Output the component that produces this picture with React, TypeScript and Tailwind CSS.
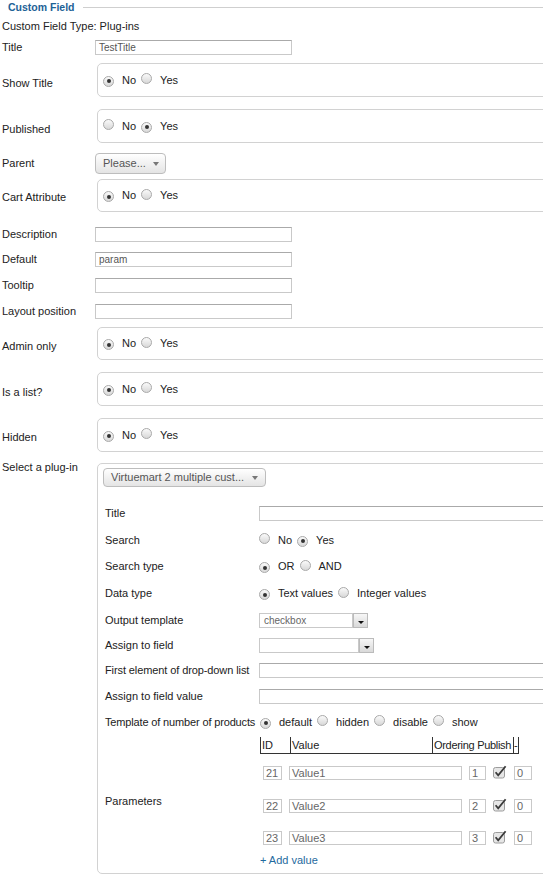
import React from 'react';

type RadioProps = { checked?: boolean };

const Radio: React.FC<RadioProps> = ({ checked }) => (
  <span className="inline-flex w-[11px] h-[11px] shrink-0 items-center justify-center rounded-full border border-[#a9a9a9] bg-linear-to-b from-[#fafafa] to-[#d8d8d8]">
    {checked && <span className="w-[4px] h-[4px] rounded-full bg-[#333]" />}
  </span>
);

const RadioOptions: React.FC<{ options: string[]; selected: number }> = ({ options, selected }) => (
  <div className="flex items-center">
    {options.map((opt, i) => (
      <React.Fragment key={opt}>
        <span className={i === 0 ? '' : 'ml-[5px]'}>
          <Radio checked={i === selected} />
        </span>
        <span className="ml-[8px]">{opt}</span>
      </React.Fragment>
    ))}
  </div>
);

const Caret: React.FC = () => (
  <span className="w-0 h-0 border-l-[3px] border-r-[3px] border-t-[4px] border-l-transparent border-r-transparent border-t-[#777]" />
);

const TextInput: React.FC<{ value?: string; width?: string }> = ({ value, width = 'w-[197px]' }) => (
  <div className={`${width} h-[15px] shrink-0 flex items-center border border-[#c9c9c9] border-t-[#aaa] bg-white px-[3px] text-[10px] leading-none text-[#555]`}>
    {value}
  </div>
);

const RadioBox: React.FC<{ selected: number }> = ({ selected }) => (
  <div className="ml-[2px] -mr-[40px] flex-1 h-full flex items-center pl-[5px] border border-[#d2d2d2] rounded-[5px]">
    <RadioOptions options={['No', 'Yes']} selected={selected} />
  </div>
);

const Row: React.FC<{ label: string; cls: string; labelCls?: string; children: React.ReactNode }> = ({
  label,
  cls,
  labelCls = '',
  children
}) => (
  <div className={`${cls} flex items-center`}>
    <div className={`w-[95px] shrink-0 pl-[2px] ${labelCls}`}>{label}</div>
    {children}
  </div>
);

const SmallSelect: React.FC<{ value?: string; width: string }> = ({ value, width }) => (
  <div className="flex h-[15px]">
    <div className={`${width} flex items-center border border-[#c9c9c9] bg-white pl-[4px] text-[10px] text-[#666]`}>{value}</div>
    <div className="w-[15px] flex items-end justify-center pb-[3px] border border-[#bbb] bg-linear-to-b from-[#f7f7f7] to-[#d9d9d9]">
      <span className="w-0 h-0 border-l-[3px] border-r-[3px] border-t-[3px] border-l-transparent border-r-transparent border-t-[#111]" />
    </div>
  </div>
);

const InnerRow: React.FC<{ label: string; cls: string; labelCls?: string; children?: React.ReactNode }> = ({
  label,
  cls,
  labelCls = '',
  children
}) => (
  <div className={`${cls} flex items-center`}>
    <div className={`w-[156px] shrink-0 pl-[2px] whitespace-nowrap ${labelCls}`}>{label}</div>
    {children}
  </div>
);

const Check: React.FC = () => (
  <svg width="15" height="14" viewBox="0 0 15 14" className="shrink-0">
    <rect x="0.5" y="2.5" width="11" height="10.5" rx="2" fill="#e6e6e6" stroke="#9c9c9c" />
    <path d="M2.6 7.2 L5.2 10.4 L12.6 1.2" stroke="#3a3a3a" strokeWidth="1.8" fill="none" />
  </svg>
);

const paramRows = [
  { id: '21', value: 'Value1', order: '1', cls: 'mt-[12px]' },
  { id: '22', value: 'Value2', order: '2', cls: 'mt-[19px]' },
  { id: '23', value: 'Value3', order: '3', cls: 'mt-[18px]' }
];

const App: React.FC = () => {
  return (
    <div className="w-[543px] h-[875px] overflow-hidden bg-white font-['Liberation_Sans',Arial,sans-serif] text-[11px] leading-[13px] text-[#222]">
      {/* Legend */}
      <div className="h-[14px] flex items-center">
        <span className="ml-[8px] text-[10.5px] font-bold text-[#1d6296]">Custom Field</span>
        <span className="ml-[8px] flex-1 h-px bg-[#cfcfcf]" />
      </div>

      <div className="mt-[6px] h-[12px] flex items-center pl-[2px]">Custom Field Type: Plug-ins</div>

      <Row label="Title" cls="mt-[8px] h-[15px]">
        <TextInput value="TestTitle" />
      </Row>
      <Row label="Show Title" cls="mt-[8px] h-[34px]" labelCls="pt-[6px]">
        <RadioBox selected={0} />
      </Row>
      <Row label="Published" cls="mt-[12px] h-[34px]" labelCls="pt-[6px]">
        <RadioBox selected={1} />
      </Row>
      <Row label="Parent" cls="mt-[10px] h-[21px]">
        <div className="w-[71px] h-[21px] flex items-center justify-between pl-[7px] pr-[6px] rounded-[4px] border border-[#bdbdbd] bg-linear-to-b from-white to-[#e4e4e4] text-[#555]">
          <span>Please...</span>
          <Caret />
        </div>
      </Row>
      <Row label="Cart Attribute" cls="mt-[5px] h-[33px]" labelCls="pt-[4px]">
        <RadioBox selected={0} />
      </Row>
      <Row label="Description" cls="mt-[15px] h-[15px]">
        <TextInput />
      </Row>
      <Row label="Default" cls="mt-[10px] h-[15px]">
        <TextInput value="param" />
      </Row>
      <Row label="Tooltip" cls="mt-[11px] h-[15px]">
        <TextInput />
      </Row>
      <Row label="Layout position" cls="mt-[11px] h-[15px]">
        <TextInput />
      </Row>
      <Row label="Admin only" cls="mt-[8px] h-[33px]" labelCls="pt-[6px]">
        <RadioBox selected={0} />
      </Row>
      <Row label="Is a list?" cls="mt-[12px] h-[34px]" labelCls="pt-[6px]">
        <RadioBox selected={0} />
      </Row>
      <Row label="Hidden" cls="mt-[12px] h-[34px]" labelCls="pt-[4px]">
        <RadioBox selected={0} />
      </Row>

      {/* Plug-in settings */}
      <div className="mt-[11px] flex items-start">
        <div className="w-[95px] shrink-0 pl-[2px] -mt-[2px]">Select a plug-in</div>
        <div className="ml-[2px] -mr-[40px] flex-1 h-[411px] pl-[5px] pt-[4px] border border-[#d2d2d2] rounded-[5px]">
          <div className="w-[163px] h-[19px] flex items-center justify-between pl-[7px] pr-[7px] rounded-[4px] border border-[#bdbdbd] bg-linear-to-b from-white to-[#e4e4e4] text-[#555]">
            <span>Virtuemart 2 multiple cust...</span>
            <Caret />
          </div>

          <div className="mt-[13px]">
            <InnerRow label="Title" cls="h-[27px]">
              <TextInput width="w-[300px]" />
            </InnerRow>
            <InnerRow label="Search" cls="h-[26px]">
              <RadioOptions options={['No', 'Yes']} selected={1} />
            </InnerRow>
            <InnerRow label="Search type" cls="h-[27px]">
              <RadioOptions options={['OR', 'AND']} selected={0} />
            </InnerRow>
            <InnerRow label="Data type" cls="h-[27px]">
              <RadioOptions options={['Text values', 'Integer values']} selected={0} />
            </InnerRow>
            <InnerRow label="Output template" cls="h-[26px]">
              <SmallSelect value="checkbox" width="w-[94px]" />
            </InnerRow>
            <InnerRow label="Assign to field" cls="h-[25px]">
              <SmallSelect width="w-[100px]" />
            </InnerRow>
            <InnerRow label="First element of drop-down list" cls="h-[25px]" labelCls="tracking-[-0.1px]">
              <TextInput width="w-[300px]" />
            </InnerRow>
            <InnerRow label="Assign to field value" cls="h-[26px]">
              <TextInput width="w-[300px]" />
            </InnerRow>
            <InnerRow label="Template of number of products" cls="h-[26px]" labelCls="tracking-[-0.15px]">
              <div className="ml-[1px]">
                <RadioOptions options={['default', 'hidden', 'disable', 'show']} selected={0} />
              </div>
            </InnerRow>

            {/* Parameters table */}
            <div className="flex">
              <div className="w-[156px] shrink-0 pl-[2px] self-center">Parameters</div>
              <div className="flex flex-col">
                <div className="mt-[2px] ml-[1px] h-[17px] flex w-fit border-b border-[#333]">
                  <div className="w-[30px] border-l border-[#333] pl-[1px] flex items-center">ID</div>
                  <div className="w-[142px] border-l border-[#333] pl-[1px] flex items-center">Value</div>
                  <div className="w-[81px] border-l border-[#333] pl-[1px] flex items-center whitespace-nowrap tracking-[-0.3px]">
                    Ordering Publish
                  </div>
                  <div className="w-[6px] border-l border-r border-[#333] flex items-center">-</div>
                </div>
                {paramRows.map((r) => (
                  <div key={r.id} className={`${r.cls} ml-[4px] h-[14px] flex items-center text-[#666]`}>
                    <div className="w-[19px] h-[14px] flex items-center border border-[#c9c9c9] pl-[2px]">{r.id}</div>
                    <div className="ml-[7px] w-[173px] h-[14px] flex items-center border border-[#c9c9c9] pl-[2px]">{r.value}</div>
                    <div className="ml-[7px] w-[17px] h-[14px] flex items-center border border-[#c9c9c9] pl-[2px]">{r.order}</div>
                    <div className="ml-[7px] -mt-[2px]">
                      <Check />
                    </div>
                    <div className="ml-[6px] w-[18px] h-[14px] flex items-center border border-[#c9c9c9] pl-[2px]">0</div>
                  </div>
                ))}
                <div className="mt-[9px] ml-[1px] h-[13px] text-[#1f6a9e]">+ Add value</div>
              </div>
            </div>
          </div>
        </div>
      </div>
    </div>
  );
};

export default App;
